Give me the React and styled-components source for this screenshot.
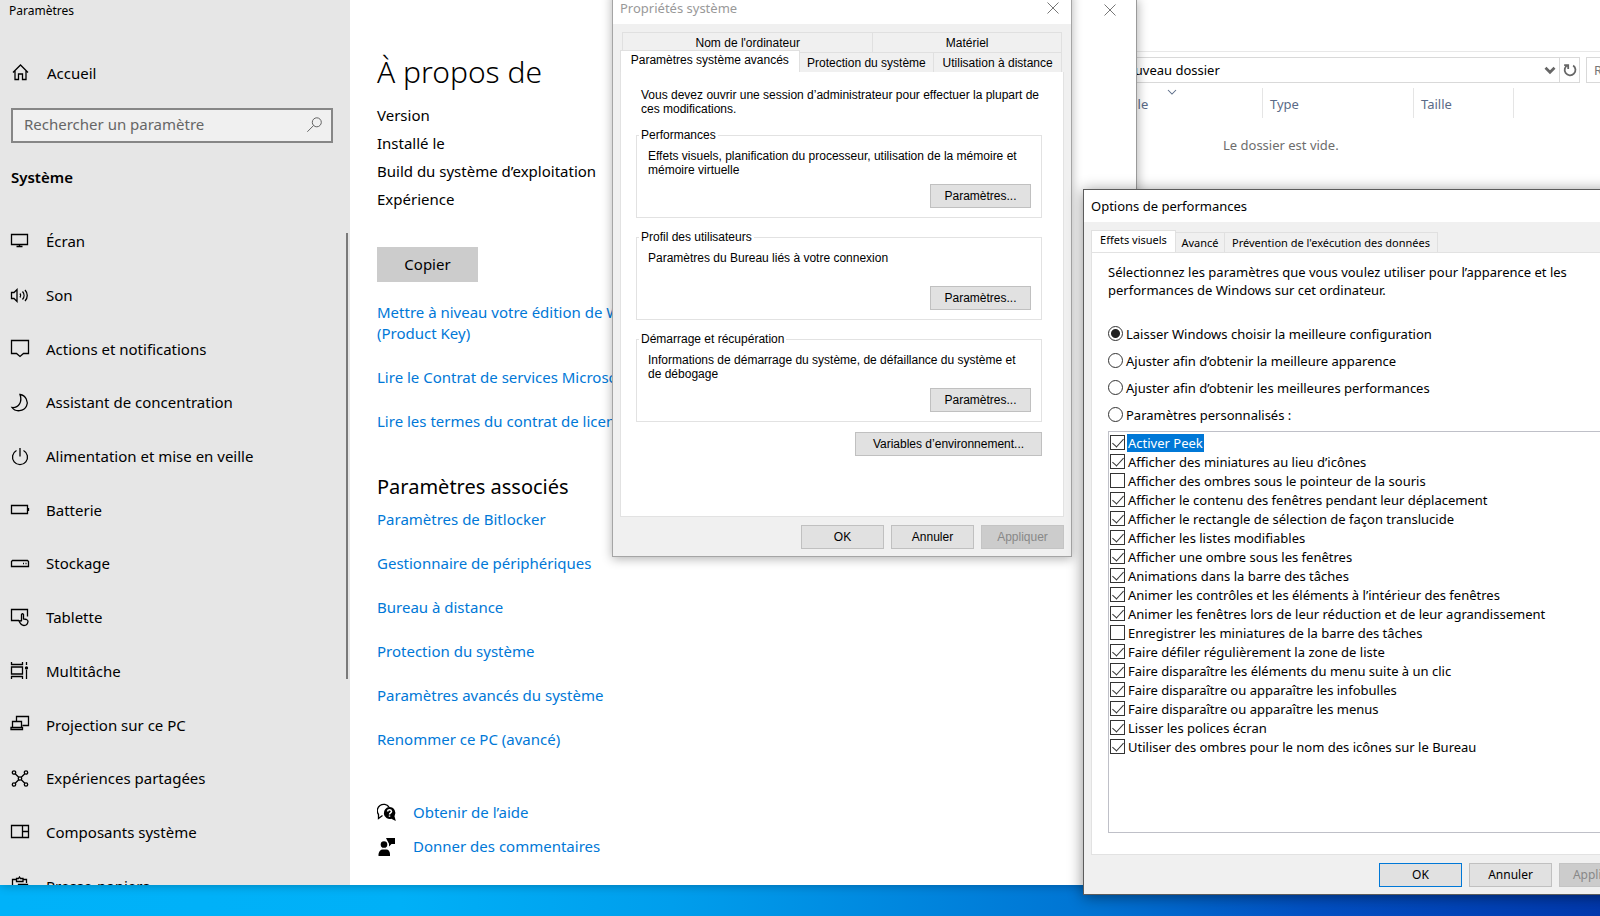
import React, { useState } from "react";
import styled, { createGlobalStyle, css } from "styled-components";

const icons = {
    home: <path d="M2 9.5 9.5 2 17 9.5M4 8v8.5h3.5V11h4v5.5H15V8" />,
    screen: <path d="M1.5 2.5h16v10h-16zM9.5 12.5v2M6.5 14.5h6" />,
    sound: <path d="M1.5 6.5v6h2.5l3 3v-12l-3 3zM10 7.5c1 1.300 1 2.700 0 4M12.500 5.500c2 2.300 2 5.700 0 8M15 4c3 3.200 3 7.800 0 11" />,
    message: <path d="M1.500 1.500h17v13h-5l-3.500 3-3.500-3h-5z" />,
    moon: <path d="M10 1.500c6 1 8.500 7 6.500 11.500-2.500 5.500-11 6.500-14.500 1.500 7 .5 10.500-6 8-13z" />,
    power: <path d="M10 1v8.500M6.500 3.500a7.500 7.500 0 1 0 7 0" />,
    battery: <path d="M1.500 5.500h16v8h-16zM18.500 8v3" />,
    storage: <path d="M2.500 6.500h15l1 1v5h-17v-5zM13 9.500h1M15.500 9.500h1" />,
    tablet: <path d="M9 12.500H1.500v-11h16v7M11.500 13V6.500q1-1.500 2 0V11l3 .5q1.500.5 1.500 2-.5 4-4 4-3 0-5-4.500 1-1 2.500.5" />,
    multi: (
        <>
            <path d="M1.500 1v2.500h11V1M1.500 6h11v7h-11zM1.500 18v-2.500h11V18M16.500 1v3M16.500 9v9" />
            <circle cx="16.500" cy="7" r="1" fill="currentColor" />
        </>
    ),
    project: <path d="M6.500 6V1.500h12v9h-6M2.500 12.500v-6h9v6M1 12.500h11.500v2H1z" />,
    share: (
        <>
            <circle cx="4" cy="3.500" r="1.700" />
            <circle cx="16" cy="3.500" r="1.700" />
            <circle cx="4" cy="15.500" r="1.700" />
            <circle cx="16" cy="15.500" r="1.700" />
            <circle cx="10" cy="9.500" r="1.700" />
            <path d="m5.200 4.700 3.500 3.500M14.800 4.700l-3.500 3.500M5.200 14.300l3.500-3.500M14.800 14.300l-3.500-3.500" />
        </>
    ),
    parts: <path d="M1.500 3.500h17v12h-17zM12.500 3.500v12M12.500 9.500h6" />,
    clipboard: <path d="M7 3.500H2.500v14h5M13 3.500h3.500V7M6.500 5.500v-3h2l1-1.500 1 1.500h2.500v3zM8.500 8.500h9v10h-9z" />,
    search: (
        <>
            <circle cx="12" cy="7" r="5" />
            <path d="M8.500 10.500 1.500 17.500" />
        </>
    ),
    help: (
        <>
            <path d="M5.500 12.500 1.500 15.500v-4A5.800 5.800 0 1 1 12 4" />
            <path fill="currentColor" stroke="none" d="M12.500 4a6 6 0 0 1 5 9.200l1.300 4.800-4.500-2.200A6 6 0 1 1 12.500 4z" />
            <path stroke="#fff" strokeWidth="1.500" d="M10.500 8.500q.3-1.700 2-1.700t2 1.700c0 1.300-2 1.300-2 3M12.500 12.500v1.300" />
        </>
    ),
    feedback: (
        <g fill="currentColor" stroke="none">
            <path d="M9 1h9v6h-3.500L12 9.500V7z" />
            <circle cx="7" cy="7.500" r="4" stroke="#fff" />
            <path d="M1.500 19v-2q1-4.500 4-4.500h4q3 0 3.500 4.500v2z" />
        </g>
    ),
    close: <path d="m4.500 4.500 11 11M15.500 4.500l-11 11" />,
    chevron: <path d="m5 7.500 5 5 5-5" />,
    refresh: <path d="M13.500 5a6 6 0 1 1-6-.5M3.500 4.500h4.500v4.500" />,
};

const Icon = ({ name, size = 20, weight = 1.3 }) => (
    <svg width={size} height={size} viewBox="0 0 20 20" fill="none" stroke="currentColor" strokeWidth={weight} aria-hidden="true">
        {icons[name]}
    </svg>
);

const navItems = [
    ["screen", "Écran"],
    ["sound", "Son"],
    ["message", "Actions et notifications"],
    ["moon", "Assistant de concentration"],
    ["power", "Alimentation et mise en veille"],
    ["battery", "Batterie"],
    ["storage", "Stockage"],
    ["tablet", "Tablette"],
    ["multi", "Multitâche"],
    ["project", "Projection sur ce PC"],
    ["share", "Expériences partagées"],
    ["parts", "Composants système"],
    ["clipboard", "Presse-papiers"],
];

const relatedLinks = [
    "Paramètres de Bitlocker",
    "Gestionnaire de périphériques",
    "Bureau à distance",
    "Protection du système",
    "Paramètres avancés du système",
    "Renommer ce PC (avancé)",
];

const groups = [
    ["Performances", "Effets visuels, planification du processeur, utilisation de la mémoire et mémoire virtuelle"],
    ["Profil des utilisateurs", "Paramètres du Bureau liés à votre connexion"],
    ["Démarrage et récupération", "Informations de démarrage du système, de défaillance du système et de débogage"],
];

const modes = [
    "Laisser Windows choisir la meilleure configuration",
    "Ajuster afin d’obtenir la meilleure apparence",
    "Ajuster afin d’obtenir les meilleures performances",
    "Paramètres personnalisés :",
];

const effects = [
    ["Activer Peek", true],
    ["Afficher des miniatures au lieu d’icônes", true],
    ["Afficher des ombres sous le pointeur de la souris", false],
    ["Afficher le contenu des fenêtres pendant leur déplacement", true],
    ["Afficher le rectangle de sélection de façon translucide", true],
    ["Afficher les listes modifiables", true],
    ["Afficher une ombre sous les fenêtres", true],
    ["Animations dans la barre des tâches", true],
    ["Animer les contrôles et les éléments à l’intérieur des fenêtres", true],
    ["Animer les fenêtres lors de leur réduction et de leur agrandissement", true],
    ["Enregistrer les miniatures de la barre des tâches", false],
    ["Faire défiler régulièrement la zone de liste", true],
    ["Faire disparaître les éléments du menu suite à un clic", true],
    ["Faire disparaître ou apparaître les infobulles", true],
    ["Faire disparaître ou apparaître les menus", true],
    ["Lisser les polices écran", true],
    ["Utiliser des ombres pour le nom des icônes sur le Bureau", true],
];

const Explorer = () => (
    <ExplorerWindow>
        <AddressRow>
            <AddressBar>
                <AddressInput aria-label="Adresse" defaultValue="Nouveau dossier" />
                <BarButton aria-label="Emplacements précédents"><Icon name="chevron" size={18} weight={3} /></BarButton>
                <BarButton $divided aria-label="Actualiser"><Icon name="refresh" size={18} weight={2} /></BarButton>
            </AddressBar>
            <FolderSearch aria-label="Rechercher dans le dossier" placeholder="Rechercher" />
        </AddressRow>
        <FileTable>
            <thead>
                <tr>
                    <FileHead $width={163}>
                        Modifié le
                        <SortMark><Icon name="chevron" size={16} /></SortMark>
                    </FileHead>
                    <FileHead $width={151}>Type</FileHead>
                    <FileHead $width={100}>Taille</FileHead>
                    <FileHead $last />
                </tr>
            </thead>
            <tbody>
                <tr><EmptyCell colSpan={4}>Le dossier est vide.</EmptyCell></tr>
            </tbody>
        </FileTable>
    </ExplorerWindow>
);

const Settings = () => (
    <SettingsWindow>
        <Sidebar>
            <AppTitle>Paramètres</AppTitle>
            <HomeLink href="#accueil"><Icon name="home" />Accueil</HomeLink>
            <SearchBox>
                <input aria-label="Rechercher un paramètre" placeholder="Rechercher un paramètre" />
                <Icon name="search" size={18} weight={1} />
            </SearchBox>
            <SidebarHeading>Système</SidebarHeading>
            <Nav>
                <NavList>
                    {navItems.map(([icon, label]) => (
                        <li key={label}><NavLink href="#systeme"><Icon name={icon} />{label}</NavLink></li>
                    ))}
                </NavList>
                <ScrollThumb />
            </Nav>
        </Sidebar>
        <About>
            <CloseButton $inset={16} aria-label="Fermer"><Icon name="close" weight={1} /></CloseButton>
            <h1>À propos de</h1>
            <Specs>
                <li>Version</li>
                <li>Installé le</li>
                <li>Build du système d’exploitation</li>
                <li>Expérience</li>
            </Specs>
            <CopyButton>Copier</CopyButton>
            <LinkList>
                <a href="#edition">Mettre à niveau votre édition de Windows<br />(Product Key)</a>
                <a href="#services">Lire le Contrat de services Microsoft</a>
                <a href="#licence">Lire les termes du contrat de licence</a>
            </LinkList>
            <h2>Paramètres associés</h2>
            <LinkList>
                {relatedLinks.map((label) => <a href="#associes" key={label}>{label}</a>)}
            </LinkList>
            <Support>
                <a href="#aide"><Icon name="help" />Obtenir de l’aide</a>
                <a href="#commentaires"><Icon name="feedback" />Donner des commentaires</a>
            </Support>
        </About>
    </SettingsWindow>
);

const SystemProperties = () => (
    <PropertiesWindow>
        <TitleBar $inactive>
            Propriétés système
            <CloseButton $inset={8} aria-label="Fermer"><Icon name="close" weight={1} /></CloseButton>
        </TitleBar>
        <DialogBody>
            <TabRow $back role="tablist">
                <Tab role="tab" $grow={250}>Nom de l'ordinateur</Tab>
                <Tab role="tab" $grow={188}>Matériel</Tab>
            </TabRow>
            <TabRow role="tablist">
                <Tab role="tab" $active $grow={178} aria-selected="true">Paramètres système avancés</Tab>
                <Tab role="tab" $grow={134}>Protection du système</Tab>
                <Tab role="tab" $grow={127}>Utilisation à distance</Tab>
            </TabRow>
            <PropertiesPanel>
                <p>Vous devez ouvrir une session d’administrateur pour effectuer la plupart de ces modifications.</p>
                {groups.map(([title, text]) => (
                    <Group key={title}>
                        <legend>{title}</legend>
                        <p>{text}</p>
                        <DialogButton $width={101}>Paramètres...</DialogButton>
                    </Group>
                ))}
                <DialogButton $width={187}>Variables d’environnement...</DialogButton>
            </PropertiesPanel>
            <Footer>
                <DialogButton>OK</DialogButton>
                <DialogButton>Annuler</DialogButton>
                <DialogButton disabled>Appliquer</DialogButton>
            </Footer>
        </DialogBody>
    </PropertiesWindow>
);

const PerformanceOptions = () => {
    const [mode, setMode] = useState(0);
    const [checked, setChecked] = useState(effects.map((effect) => effect[1]));
    const toggle = (index) => {
        setChecked(checked.map((value, i) => (i === index ? !value : value)));
    };
    return (
        <PerformanceWindow>
            <TitleBar>Options de performances</TitleBar>
            <DialogBody>
                <TabRow role="tablist">
                    <Tab role="tab" $active $width={85} aria-selected="true">Effets visuels</Tab>
                    <Tab role="tab" $width={49}>Avancé</Tab>
                    <Tab role="tab" $width={213}>Prévention de l'exécution des données</Tab>
                </TabRow>
                <EffectsPanel>
                    <p>Sélectionnez les paramètres que vous voulez utiliser pour l’apparence et les<br />performances de Windows sur cet ordinateur.</p>
                    <Modes>
                        {modes.map((label, index) => (
                            <label key={label}>
                                <Radio type="radio" name="mode" checked={mode === index} onChange={() => setMode(index)} />
                                {label}
                            </label>
                        ))}
                    </Modes>
                    <EffectList>
                        {effects.map(([label], index) => (
                            <EffectRow key={label} $selected={index === 0}>
                                <Checkbox type="checkbox" checked={checked[index]} onChange={() => toggle(index)} />
                                <span>{label}</span>
                            </EffectRow>
                        ))}
                    </EffectList>
                </EffectsPanel>
                <Footer>
                    <DialogButton $primary>OK</DialogButton>
                    <DialogButton>Annuler</DialogButton>
                    <DialogButton disabled>Appliquer</DialogButton>
                </Footer>
            </DialogBody>
        </PerformanceWindow>
    );
};

const App = () => (
    <>
        <GlobalStyle />
        <Desktop>
            <Explorer />
            <Settings />
            <SystemProperties />
            <PerformanceOptions />
        </Desktop>
    </>
);

export default App;

const GlobalStyle = createGlobalStyle`
  * {
    box-sizing: border-box;
  }
  body {
    margin: 0;
    color: #000;
    font: 13px/18px "Noto Sans", "Open Sans", sans-serif;
  }
  h1, h2, p, ul {
    margin: 0;
    padding: 0;
  }
  ul {
    list-style: none;
  }
  a {
    color: #0078d7;
    text-decoration: none;
  }
  button, input {
    font: inherit;
    color: inherit;
    padding: 0;
    border: 0;
    border-radius: 0;
    background: none;
  }
  svg {
    flex: none;
  }
`;

const Desktop = styled.main`
  position: relative;
  height: 100vh;
  min-height: 900px;
  overflow: hidden;
  background: linear-gradient(90deg, #00b2f9 0%, #00b0f7 25%, #009eec 42%, #0074d3 68%, #0250c3 82%, #0038ad 100%);
`;

/* windows float freely on the desktop */
const windowBase = css`
  position: absolute;
  display: flex;
  flex-direction: column;
`;

const ExplorerWindow = styled.section`
  ${windowBase}
  top: 0;
  left: 1100px;
  right: -141px;
  bottom: 40px;
  padding-top: 51px;
  background: #fff;
`;

const AddressRow = styled.div`
  display: flex;
  gap: 6px;
  padding: 5px 0;
  border-top: 1px solid #e8e8e8;
`;

const AddressBar = styled.div`
  display: flex;
  flex: 1;
  height: 26px;
  border: 1px solid #d9d9d9;
`;

const AddressInput = styled.input`
  flex: 1;
  min-width: 0;
  padding-left: 16px;
`;

const BarButton = styled.button`
  display: flex;
  align-items: center;
  justify-content: center;
  width: 20px;
  color: #666;
  border-left: 1px solid ${({ $divided }) => ($divided ? "#d9d9d9" : "transparent")};
`;

const FolderSearch = styled.input`
  width: 155px;
  padding-left: 7px;
  border: 1px solid #d9d9d9;
  &::placeholder {
    color: #777;
    opacity: 1;
  }
`;

const FileTable = styled.table`
  width: 100%;
  table-layout: fixed;
  border-collapse: collapse;
`;

const FileHead = styled.th`
  position: relative;
  width: ${({ $width }) => ($width ? `${$width}px` : "auto")};
  height: 30px;
  padding: 2px 7px 0 7px;
  color: #5a6b87;
  font-weight: 400;
  text-align: left;
  ${({ $last }) => !$last && "box-shadow: inset -1px 0 #e5e5e5;"}
  &:first-child {
    padding-left: 0;
    text-indent: -12px;
  }
`;

const SortMark = styled.span`
  position: absolute;
  top: -4px;
  left: 64px;
  text-indent: 0;
`;

const EmptyCell = styled.td`
  padding: 18px 0 0 123px;
  color: #6d6d6d;
`;

const SettingsWindow = styled.section`
  ${windowBase}
  flex-direction: row;
  top: 0;
  bottom: 31px;
  left: 0;
  right: 463px;
  background: #fff;
  border-right: 1px solid #9a9a9a;
  box-shadow: 1px 0 10px rgba(0, 0, 0, 0.3);
  font-size: 15px;
  line-height: 21px;
`;

const Sidebar = styled.aside`
  display: flex;
  flex-direction: column;
  flex: 0 0 350px;
  background: #e6e6e6;
`;

const AppTitle = styled.div`
  padding: 2px 9px;
  font-size: 12px;
  line-height: 18px;
`;

const HomeLink = styled.a`
  display: flex;
  align-items: center;
  gap: 16px;
  height: 40px;
  margin-top: 31px;
  padding-left: 11px;
  color: #000;
`;

const SearchBox = styled.div`
  display: flex;
  align-items: center;
  height: 35px;
  margin: 15px 17px 0 11px;
  padding: 0 7px 2px 11px;
  color: #555;
  background: #f0f0f0;
  border: 2px solid #868686;
  input {
    flex: 1;
    outline: 0;
  }
  input::placeholder {
    color: #666;
    opacity: 1;
  }
`;

const SidebarHeading = styled.div`
  margin-top: 24px;
  padding-left: 11px;
  font-weight: 600;
`;

const Nav = styled.nav`
  display: flex;
  flex: 1;
  min-height: 0;
  margin-top: 27px;
  overflow: hidden;
`;

/* runs past the window's bottom edge so the last entry shows half cut */
const NavList = styled.ul`
  display: grid;
  flex: 1;
  grid-auto-rows: 1fr;
  height: calc(100% + 28px);
`;

const NavLink = styled.a`
  display: flex;
  align-items: center;
  gap: 16px;
  height: 100%;
  padding-left: 10px;
  color: #000;
`;

const ScrollThumb = styled.div`
  width: 2px;
  height: 446px;
  margin: 18px 2px 0 0;
  background: #7a7a7a;
`;

const About = styled.div`
  position: relative;
  flex: 1;
  padding: 48px 27px 0;
  h1 {
    font-size: 30px;
    font-weight: 300;
    line-height: 48px;
  }
  h2 {
    margin-top: 40px;
    font-size: 20px;
    font-weight: 400;
    line-height: 30px;
  }
  h2 + div {
    margin-top: 7px;
  }
`;

const CloseButton = styled.button`
  position: absolute;
  top: 0;
  right: ${({ $inset }) => $inset}px;
  display: flex;
  color: #777;
`;

const Specs = styled.ul`
  margin-top: 5px;
  line-height: 28px;
`;

const CopyButton = styled.button`
  width: 101px;
  height: 35px;
  margin-top: 34px;
  background: #ccc;
`;

const LinkList = styled.div`
  display: flex;
  flex-direction: column;
  align-items: flex-start;
  gap: 23px;
  margin-top: 20px;
`;

const Support = styled.div`
  display: flex;
  flex-direction: column;
  gap: 13px;
  margin-top: 52px;
  a {
    display: flex;
    align-items: center;
    gap: 16px;
  }
  svg {
    color: #000;
  }
`;

const PropertiesWindow = styled.section`
  ${windowBase}
  top: -9px;
  left: 612px;
  width: 460px;
  border: 1px solid #a5a5a5;
  box-shadow: 0 2px 10px rgba(0, 0, 0, 0.3);
  font: 12px/14px "Liberation Sans", Arial, sans-serif;
`;

const PerformanceWindow = styled.section`
  ${windowBase}
  top: 189px;
  right: -50px;
  bottom: 21px;
  width: 567px;
  border: 1px solid #5c5c5c;
  box-shadow: 0 2px 14px rgba(0, 0, 0, 0.45);
`;

const TitleBar = styled.header`
  position: relative;
  display: flex;
  align-items: center;
  flex: none;
  height: 32px;
  padding-left: 7px;
  font: 13px/18px "Noto Sans", "Open Sans", sans-serif;
  color: ${({ $inactive }) => ($inactive ? "#999" : "#000")};
  background: #fff;
  ${CloseButton} {
    top: 6px;
  }
`;

const DialogBody = styled.div`
  display: flex;
  flex: 1;
  flex-direction: column;
  padding: 8px 7px 7px;
  background: #f0f0f0;
`;

/* the back row of tabs is partly covered by the front one */
const TabRow = styled.div`
  display: flex;
  align-items: flex-end;
  padding: 0 2px 0 ${({ $back }) => ($back ? 2 : 0)}px;
  margin-bottom: ${({ $back }) => ($back ? -2 : 0)}px;
`;

const Tab = styled.button`
  flex: ${({ $grow, $width }) => ($grow ? `${$grow} 1 0` : `0 0 ${$width}px`)};
  height: 20px;
  font-size: ${({ $grow }) => ($grow ? 12 : 11)}px;
  white-space: nowrap;
  border: 1px solid #e0e0e0;
  border-width: 1px 1px 0 0;
  &:first-child {
    border-left-width: 1px;
  }
  ${({ $active }) => $active && css`
    height: 22px;
    padding-bottom: 4px;
    background: #fff;
  `}
`;

const panel = css`
  display: flex;
  flex: 1;
  flex-direction: column;
  background: #fff;
  border: 1px solid #e2e2e2;
  border-top: 0;
`;

const PropertiesPanel = styled.div`
  ${panel}
  align-items: flex-end;
  padding: 16px 21px 60px 15px;
  > p {
    align-self: stretch;
    padding-left: 5px;
  }
`;

const DialogButton = styled.button`
  width: ${({ $width = 83 }) => $width}px;
  height: 24px;
  font-size: 12px;
  background: #e1e1e1;
  border: 1px solid ${({ $primary }) => ($primary ? "#0078d7" : "#c0c0c0")};
  &:disabled {
    color: #888;
    background: #ccc;
    border-color: #c4c4c4;
  }
`;

const Group = styled.fieldset`
  display: flex;
  flex-direction: column;
  align-self: stretch;
  height: 90px;
  margin: 12px 0 0;
  padding: 7px 10px 10px 11px;
  border: 1px solid #e2e2e2;
  legend {
    margin-left: -9px;
    padding: 0 2px;
  }
  p {
    height: 35px;
  }
  ${DialogButton} {
    align-self: flex-end;
  }
  & + ${DialogButton} {
    margin-top: 10px;
  }
`;

const EffectsPanel = styled.div`
  ${panel}
  padding: 10px 16px 21px;
  border-top: 1px solid #e2e2e2;
`;

const Modes = styled.div`
  display: flex;
  flex-direction: column;
  margin-top: 21px;
  label {
    display: flex;
    align-items: center;
    gap: 3px;
    height: 27px;
  }
`;

const Radio = styled.input`
  appearance: none;
  width: 15px;
  height: 15px;
  margin: 0;
  border: 1px solid #333;
  border-radius: 50%;
  &:checked {
    background: radial-gradient(circle, #222 4px, #fff 5px);
  }
`;

const EffectList = styled.div`
  flex: 1;
  margin-top: 3px;
  padding: 1px;
  border: 1px solid #bfc0c8;
`;

const EffectRow = styled.label`
  display: flex;
  align-items: center;
  gap: 2px;
  height: 19px;
  span {
    padding: 0 1px;
    color: ${({ $selected }) => ($selected ? "#fff" : "#000")};
    background: ${({ $selected }) => ($selected ? "#0078d7" : "none")};
  }
`;

const Checkbox = styled.input`
  appearance: none;
  display: grid;
  justify-content: center;
  width: 15px;
  height: 15px;
  margin: 0;
  border: 1px solid #333;
  &:checked::after {
    content: "";
    width: 5px;
    height: 10px;
    border: solid #333;
    border-width: 0 1px 1px 0;
    transform: rotate(42deg);
  }
`;

const Footer = styled.footer`
  display: flex;
  justify-content: flex-end;
  gap: 7px;
  padding-top: 8px;
`;
